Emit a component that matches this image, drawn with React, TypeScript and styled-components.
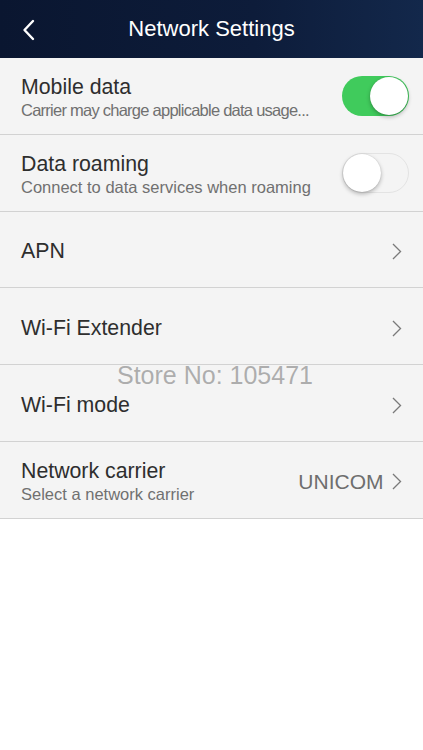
import styled, { createGlobalStyle } from "styled-components";

const GlobalStyle = createGlobalStyle`
  html, body {
    margin: 0;
    padding: 0;
    background: #ffffff;
    font-family: "Liberation Sans", Arial, sans-serif;
  }
`;

type Item = {
  title: string;
  subtitle?: string;
  tight?: boolean;
  toggle?: boolean;
  value?: string;
};

const items: Item[] = [
  { title: "Mobile data", subtitle: "Carrier may charge applicable data usage...", tight: true, toggle: true },
  { title: "Data roaming", subtitle: "Connect to data services when roaming", toggle: false },
  { title: "APN" },
  { title: "Wi-Fi Extender" },
  { title: "Wi-Fi mode" },
  { title: "Network carrier", subtitle: "Select a network carrier", value: "UNICOM" },
];

const Chevron = ({ color = "#7a7a7a", size = 17, width = 1.4 }: { color?: string; size?: number; width?: number }) => (
  <svg width={size * 0.56} height={size} viewBox="0 0 10 18" fill="none">
    <path d="M1 1 L9 9 L1 17" stroke={color} strokeWidth={width} strokeLinejoin="miter" />
  </svg>
);

const BackArrow = () => (
  <svg width="13" height="22" viewBox="0 0 13 22" fill="none">
    <path d="M11 2 L2.5 11 L11 20" stroke="#ffffff" strokeWidth={2.4} strokeLinecap="round" strokeLinejoin="round" />
  </svg>
);

const App = () => {
  return (
    <Page>
      <GlobalStyle />
      <Header>
        <BackButton>
          <BackArrow />
        </BackButton>
        <HeaderTitle>Network Settings</HeaderTitle>
      </Header>
      <List>
        {items.map((item) => (
          <Row key={item.title}>
            <TextCol>
              <Title>{item.title}</Title>
              {item.subtitle && <Subtitle $tight={item.tight}>{item.subtitle}</Subtitle>}
            </TextCol>
            {item.toggle !== undefined ? (
              <Switch $on={item.toggle}>
                <Knob $on={item.toggle} />
              </Switch>
            ) : (
              <Trail>
                {item.value && <Value>{item.value}</Value>}
                <Chevron />
              </Trail>
            )}
          </Row>
        ))}
        <Watermark>Store No: 105471</Watermark>
      </List>
    </Page>
  );
};

export default App;

const Page = styled.div`
  width: 423px;
  min-height: 750px;
  background: #ffffff;
`;

const Header = styled.header`
  height: 58px;
  display: flex;
  align-items: center;
  justify-content: center;
  position: relative;
  background: linear-gradient(90deg, #0a1630 0%, #0d1c3a 60%, #13284b 100%);
`;

const BackButton = styled.div`
  position: absolute;
  left: 22px;
  top: 19px;
  display: flex;
`;

const HeaderTitle = styled.h1`
  margin: 0;
  color: #ffffff;
  font-size: 22px;
  font-weight: 400;
`;

const List = styled.div`
  position: relative;
  background: #f4f4f4;
  display: flex;
  flex-direction: column;
`;

const Row = styled.div`
  box-sizing: border-box;
  height: 76.8px;
  padding: 4px 14px 0 21px;
  display: flex;
  align-items: center;
  justify-content: space-between;
  border-bottom: 1.5px solid #d2d2d2;
`;

const TextCol = styled.div`
  display: flex;
  flex-direction: column;
  gap: 1px;
`;

const Title = styled.div`
  color: #2e2e2e;
  font-size: 21.3px;
  line-height: 25px;
`;

const Subtitle = styled.div<{ $tight?: boolean }>`
  color: #707070;
  font-size: 16.5px;
  line-height: 19px;
  white-space: nowrap;
  letter-spacing: ${(p) => (p.$tight ? "-0.75px" : "0")};
`;

const Trail = styled.div`
  display: flex;
  align-items: center;
  gap: 9px;
  padding-right: 7px;
`;

const Value = styled.span`
  color: #6e6e6e;
  font-size: 21px;
`;

const Switch = styled.div<{ $on: boolean }>`
  box-sizing: border-box;
  width: 67px;
  height: 40px;
  border-radius: 20px;
  display: flex;
  align-items: center;
  justify-content: ${(p) => (p.$on ? "flex-end" : "flex-start")};
  padding: 1px;
  margin-top: -3px;
  background: ${(p) => (p.$on ? "#40cb5c" : "#f4f4f4")};
  border: ${(p) => (p.$on ? "none" : "1.5px solid #e3e3e3")};
`;

const Knob = styled.div<{ $on: boolean }>`
  width: 38px;
  height: 38px;
  border-radius: 50%;
  background: #ffffff;
  box-shadow: 0 2px 4px rgba(0, 0, 0, 0.28), 0 0 1px rgba(0, 0, 0, 0.2);
  margin: ${(p) => (p.$on ? "0" : "-1px 0 0 -1px")};
`;

const Watermark = styled.div`
  position: absolute;
  left: 117px;
  top: 303px;
  color: rgba(150, 150, 150, 0.75);
  font-size: 25px;
  pointer-events: none;
`;
